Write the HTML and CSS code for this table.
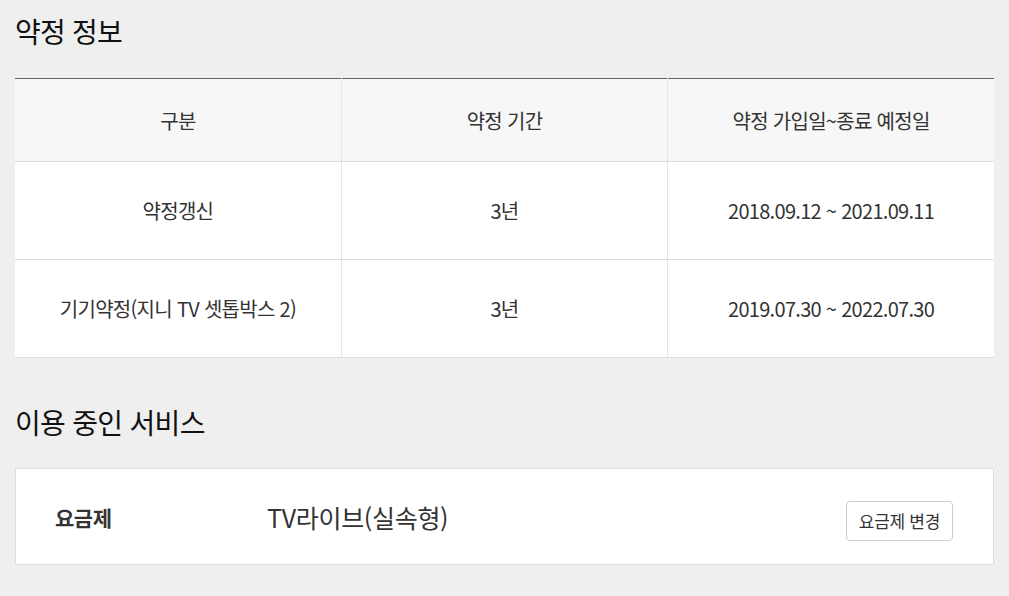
FILE: index.html
```html
<!DOCTYPE html>
<html lang="ko">
<head>
  <meta charset="UTF-8">
  <title>약정 정보</title>
  <link rel="stylesheet" href="styles.css">
</head>
<body>

  <div class="wrap">
    <h3 class="title">약정 정보</h3>
    <table class="agree-table">
      <thead>
        <tr>
          <th>구분</th>
          <th>약정 기간</th>
          <th>약정 가입일~종료 예정일</th>
        </tr>
      </thead>
      <tbody>
        <tr>
          <td>약정갱신</td>
          <td>3년</td>
          <td>2018.09.12 ~ 2021.09.11</td>
        </tr>
        <tr>
          <td>기기약정(지니 TV 셋톱박스 2)</td>
          <td>3년</td>
          <td>2019.07.30 ~ 2022.07.30</td>
        </tr>
      </tbody>
    </table>

    <h3 class="title title-second">이용 중인 서비스</h3>
    <div class="service-box">
      <span class="service-label">요금제</span>
      <span class="service-name">TV라이브(실속형)</span>
      <button type="button" class="btn-change">요금제 변경</button>
    </div>
  </div>

</body>
</html>
```

FILE: styles.css
```css
body {
  margin: 0;
  background: #efefef;
  font-family: "Noto Sans CJK KR", "Noto Sans", sans-serif;
  color: #333;
}
.wrap {
  padding: 0 15px;
}
.title {
  margin: 0;
  padding-top: 11px;
  height: 78px;
  box-sizing: border-box;
  font-size: 28px;
  font-weight: 400;
  line-height: 40px;
  color: #111;
  letter-spacing: -0.8px;
}
.title-second {
  margin-top: 44px;
  padding-top: 0;
  height: 66px;
  line-height: 40px;
  letter-spacing: -0.7px;
}
.agree-table {
  width: 100%;
  border-collapse: collapse;
  table-layout: fixed;
  border-top: 1px solid #666;
}
.agree-table th,
.agree-table td {
  text-align: center;
  border-left: 1px solid #e5e5e5;
  border-bottom: 1px solid #ddd;
  letter-spacing: -0.7px;
}
.agree-table th:first-child,
.agree-table td:first-child {
  border-left: 0;
}
.agree-table th {
  height: 82px;
  padding: 0;
  background: #f7f7f7;
  font-size: 20px;
  font-weight: 400;
  color: #333;
}
.agree-table td {
  height: 97px;
  padding: 0;
  background: #fff;
  font-size: 20px;
  color: #333;
}
.service-box {
  display: flex;
  align-items: center;
  height: 97px;
  box-sizing: border-box;
  padding: 0 40px 0 39px;
  background: #fff;
  border: 1px solid #ddd;
}
.service-label {
  width: 212px;
  font-size: 21px;
  font-weight: 700;
  color: #333;
  letter-spacing: -0.5px;
}
.service-name {
  flex: 1;
  font-size: 25px;
  color: #333;
  letter-spacing: -0.3px;
}
.btn-change {
  height: 40px;
  margin-top: 8px;
  padding: 0 12px;
  background: #fff;
  border: 1px solid #ccc;
  border-radius: 4px;
  font-family: inherit;
  font-size: 17px;
  color: #333;
  letter-spacing: -0.3px;
}
```
